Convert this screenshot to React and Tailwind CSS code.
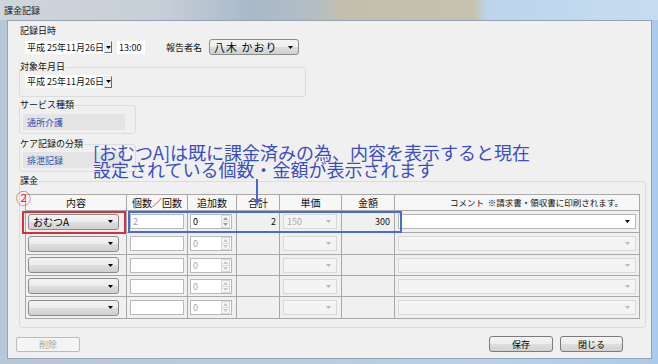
import React from "react";

function Tri({ c = "#000" }) {
  return (
    <svg width="5" height="3" viewBox="0 0 5 3" className="block">
      <path d="M0 0H5L2.5 3Z" fill={c} />
    </svg>
  );
}

function WinCombo({ className = "", text, textClass = "text-[10px]" }) {
  return (
    <div
      className={`flex items-center rounded-[3px] border border-[#8c8c8c] bg-[linear-gradient(#f4f4f4,#ececec_50%,#dedede_51%,#d0d0d0)] ${className}`}
    >
      <span className={`pl-[4px] leading-none text-black whitespace-nowrap ${textClass}`}>{text}</span>
      <span className="ml-auto mr-[5px]">
        <Tri />
      </span>
    </div>
  );
}

function DatePick() {
  return (
    <div className="flex items-center h-[13px] w-[87px] bg-white">
      <span className="pl-[2px] text-[9px] leading-none whitespace-nowrap">平成 25年11月26日</span>
      <div className="ml-auto w-[11px] h-[12px] border-t border-l border-[#e8e8e8] border-r-[#6a6a6a] border-b-[#6a6a6a] border-r border-b bg-[#f0f0f0] flex items-center justify-center">
        <Tri />
      </div>
    </div>
  );
}

function GroupBox({ label, className = "", children }) {
  return (
    <div className={`relative border border-[#dadde0] rounded-[3px] ${className}`}>
      <span className="absolute -top-[6px] left-[0px] bg-[#f0f0f0] pr-[1px] text-[9px] leading-[10px] whitespace-nowrap">
        {label}
      </span>
      {children}
    </div>
  );
}

function Spinner({ dim }) {
  const c = dim ? "#c8c8c8" : "#9a9a9a";
  return (
    <div className="ml-auto mr-[1px] w-[9px] h-[13px] flex flex-col border border-[#d8d8d8] bg-[#f6f6f6]">
      <div className="flex-1 flex items-center justify-center border-b border-[#dcdcdc]">
        <svg width="5" height="3" viewBox="0 0 5 3"><path d="M0 3H5L2.5 0Z" fill={c} /></svg>
      </div>
      <div className="flex-1 flex items-center justify-center">
        <svg width="5" height="3" viewBox="0 0 5 3"><path d="M0 0H5L2.5 3Z" fill={c} /></svg>
      </div>
    </div>
  );
}

function DisCombo({ className = "", text }) {
  return (
    <div className={`flex items-center h-[15px] border border-[#d9d9d9] bg-[#f4f4f4] ${className}`}>
      <span className="pl-[3px] text-[9px] leading-none text-[#a8a8a8]">{text}</span>
      <span className="ml-auto mr-[5px]">
        <Tri c="#b8b8b8" />
      </span>
    </div>
  );
}

const rows = [
  { h: "h-[22px]", item: "おむつA", qty: "2", total: "2", price: "150", amount: "300", active: true },
  { h: "h-[22px]" },
  { h: "h-[21px]" },
  { h: "h-[21px]" },
  { h: "h-[22px]" },
];

function Cell({ className = "", children }) {
  return (
    <div className={`flex items-center border-r border-b border-[#a8a8a8] ${className}`}>{children}</div>
  );
}

function Table() {
  return (
    <div className="w-[615px] border-l border-t border-[#a8a8a8] grid grid-cols-[101px_61px_49px_43px_62px_53px_245px] text-[10px] leading-none">
      <Cell className="h-[16px] justify-center bg-[#f7f7f7]">内容</Cell>
      <Cell className="h-[16px] justify-center bg-[#f7f7f7]">個数／回数</Cell>
      <Cell className="h-[16px] justify-center bg-[#f7f7f7]">追加数</Cell>
      <Cell className="h-[16px] justify-center bg-[#f7f7f7]">合計</Cell>
      <Cell className="h-[16px] justify-center bg-[#f7f7f7]">単価</Cell>
      <Cell className="h-[16px] justify-center bg-[#f7f7f7]">金額</Cell>
      <Cell className="h-[16px] justify-end pr-[16px] bg-[#f7f7f7] whitespace-nowrap text-[8.5px]">
        コメント&nbsp;&nbsp;※請求書・領収書に印刷されます。
      </Cell>
      {rows.map((r, i) => (
        <React.Fragment key={i}>
          <Cell className={`${r.h} pl-[2px]`}>
            <WinCombo className="w-[91px] h-[16px]" text={r.item || ""} />
          </Cell>
          <Cell className={`${r.h} pl-[3px]`}>
            <div className="w-[54px] h-[15px] bg-white border border-[#b5b8bd] flex items-center">
              <span className="pl-[2px] text-[9px] text-[#8fa4d6]">{r.qty || ""}</span>
            </div>
          </Cell>
          <Cell className={`${r.h} pl-[2px]`}>
            <div className="w-[42px] h-[15px] bg-white border border-[#b5b8bd] flex items-center">
              <span className={`pl-[2px] text-[9px] ${r.active ? "text-black" : "text-[#a8a8a8]"}`}>0</span>
              <Spinner dim={!r.active} />
            </div>
          </Cell>
          <Cell className={`${r.h} justify-end pr-[3px]`}>
            <span className="text-[9px]">{r.total || ""}</span>
          </Cell>
          <Cell className={`${r.h} pl-[3px]`}>
            <DisCombo className="w-[54px]" text={r.price || ""} />
          </Cell>
          <Cell className={`${r.h} justify-end pr-[4px]`}>
            <span className="text-[9px]">{r.amount || ""}</span>
          </Cell>
          <Cell className={`${r.h} pl-[3px]`}>
            {r.active ? (
              <div className="w-[238px] h-[15px] bg-white border border-[#b5b8bd] flex items-center">
                <span className="ml-auto mr-[5px]">
                  <Tri />
                </span>
              </div>
            ) : (
              <DisCombo className="w-[238px]" text="" />
            )}
          </Cell>
        </React.Fragment>
      ))}
    </div>
  );
}

function Btn({ children, disabled, className = "" }) {
  return disabled ? (
    <div className={`h-[15px] flex items-center justify-center rounded-[2px] border border-[#b9bdc1] bg-[#f4f4f4] text-[9px] leading-none text-[#a6a6a6] ${className}`}>
      {children}
    </div>
  ) : (
    <div
      className={`h-[16px] flex items-center justify-center rounded-[3px] border border-[#7a7a7a] bg-[linear-gradient(#f4f4f4,#ececec_50%,#dedede_51%,#d2d2d2)] text-[9px] leading-none text-black ${className}`}
    >
      {children}
    </div>
  );
}

export default function App() {
  return (
    <div className="relative w-[658px] h-[364px] overflow-hidden font-['Noto_Sans_CJK_JP','Noto_Sans',sans-serif] text-[#111] bg-[linear-gradient(to_right,#b6c7d8,#bccbd9_40%,#b9d1e8_75%,#a9cbec)]">
      {/* title bar */}
      <div className="h-[20px] flex items-center pl-[4px] bg-[linear-gradient(to_right,#cfd5dc_0%,#c6ced7_25%,#a9b9c9_38%,#b4bdc4_48%,#c3bfac_52%,#c6c2ae_72%,#bcd5ed_74%,#c6dcf0_100%)]">
        <span className="text-[9px] leading-none text-[#1b1b1b]">課金記録</span>
      </div>

      {/* client area */}
      <div className="ml-[7px] w-[645px] h-[339px] border border-[#96a3b2] bg-[#f0f0f0]">
        <div className="flex flex-col">
          <div className="ml-[12px] mt-[5px] h-[10px] text-[9px] leading-[10px]">記録日時</div>
          <div className="ml-[17px] mt-[3px] h-[16px] flex items-center">
            <DatePick />
            <div className="ml-[5px] w-[28px] h-[13px] bg-white flex items-center">
              <span className="pl-[2px] text-[9px] leading-none">13:00</span>
            </div>
            <span className="ml-[21px] text-[9px] leading-none">報告者名</span>
            <WinCombo className="ml-[7px] w-[90px] h-[16px]" text="八木 かおり" textClass="text-[11px] tracking-[1px] text-[#222]" />
          </div>

          <GroupBox label="対象年月日" className="ml-[11px] mt-[12px] w-[287px] h-[30px]">
            <div className="mt-[7px] ml-[5px]">
              <DatePick />
            </div>
          </GroupBox>

          <GroupBox label="サービス種類" className="ml-[11px] mt-[8px] w-[117px] h-[29px]">
            <div className="mt-[8px] ml-[3px] w-[102px] h-[16px] bg-[#e4e4e4] flex items-center">
              <span className="pl-[4px] text-[9px] leading-none text-[#2f4fb0]">通所介護</span>
            </div>
          </GroupBox>

          <GroupBox label="ケア記録の分類" className="ml-[11px] mt-[10px] w-[117px] h-[28px]">
            <div className="mt-[7px] ml-[3px] w-[102px] h-[16px] bg-[#e4e4e4] flex items-center">
              <span className="pl-[4px] text-[9px] leading-none text-[#2f4fb0]">排泄記録</span>
            </div>
          </GroupBox>

          <GroupBox label="課金" className="ml-[11px] mt-[9px] w-[627px] h-[147px]">
            <div className="mt-[12px] ml-[5px]">
              <Table />
            </div>
          </GroupBox>

          <div className="mt-[8px] flex items-center">
            <Btn disabled className="ml-[8px] w-[64px]">削除</Btn>
            <Btn className="ml-auto w-[64px]">保存</Btn>
            <Btn className="ml-[7px] mr-[28px] w-[63px]">閉じる</Btn>
          </div>
        </div>
      </div>

      {/* annotations */}
      <div className="absolute left-[93px] top-[144px] text-[18px] leading-[17px] text-[#3a4ec4] whitespace-nowrap">
        <div>[おむつA]は既に課金済みの為、内容を表示すると現在</div>
        <div>設定されている個数・金額が表示されます</div>
      </div>
      <svg className="absolute left-[252px] top-[179px]" width="10" height="29" viewBox="0 0 10 29">
        <path d="M5 0V23" stroke="#4668d6" strokeWidth="2" />
        <path d="M1.5 20L5 27L8.5 20Z" fill="#4668d6" />
      </svg>
      <div className="absolute left-[128px] top-[211px] w-[274px] h-[22px] border-2 border-[#4a6ad8]" />
      <div className="absolute left-[22px] top-[211px] w-[104px] h-[23px] border-2 border-[#d8303c]" />
      <div className="absolute left-[16px] top-[190px] text-[15px] leading-[15px] text-[#e0323c]">②</div>
    </div>
  );
}
